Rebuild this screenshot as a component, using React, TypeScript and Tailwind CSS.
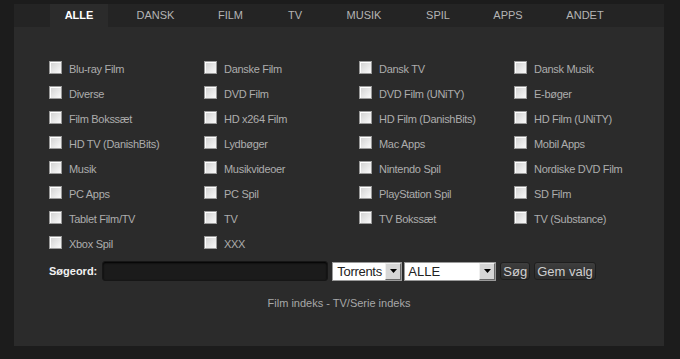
import { useState } from 'react'

const TABS: { label: string; width: number }[] = [
  { label: 'ALLE', width: 58 },
  { label: 'DANSK', width: 65 },
  { label: 'FILM', width: 55 },
  { label: 'TV', width: 44 },
  { label: 'MUSIK', width: 64 },
  { label: 'SPIL', width: 54 },
  { label: 'APPS', width: 56 },
  { label: 'ANDET', width: 68 },
]

const CATEGORIES = [
  'Blu-ray Film', 'Danske Film', 'Dansk TV', 'Dansk Musik',
  'Diverse', 'DVD Film', 'DVD Film (UNiTY)', 'E-bøger',
  'Film Bokssæt', 'HD x264 Film', 'HD Film (DanishBits)', 'HD Film (UNiTY)',
  'HD TV (DanishBits)', 'Lydbøger', 'Mac Apps', 'Mobil Apps',
  'Musik', 'Musikvideoer', 'Nintendo Spil', 'Nordiske DVD Film',
  'PC Apps', 'PC Spil', 'PlayStation Spil', 'SD Film',
  'Tablet Film/TV', 'TV', 'TV Bokssæt', 'TV (Substance)',
  'Xbox Spil', 'XXX',
]

function Checkbox() {
  return (
    <span className="block h-[13px] w-[13px] shrink-0 border border-[#9a9a9a] bg-gradient-to-br from-[#d0d0d0] to-[#fafafa] shadow-[inset_1px_1px_0_#ffffff]" />
  )
}

function DropArrow() {
  return (
    <span className="flex h-[17px] w-[16px] items-center justify-center border border-t-[#f0f0f0] border-l-[#f0f0f0] border-r-[#6a6a6a] border-b-[#6a6a6a] bg-[#d6d6d6]">
      <svg width="7" height="4" viewBox="0 0 7 4">
        <path d="M0 0h7L3.5 4z" fill="#000" />
      </svg>
    </span>
  )
}

export default function App() {
  const [active, setActive] = useState('ALLE')

  return (
    <div className="h-[359px] w-[680px] bg-[#1c1c1c] pl-[14px] pt-[4px] font-['Liberation_Sans',Arial,sans-serif]">
      <div className="h-[342px] w-[650px] bg-[#2b2b2b]">
        {/* Tabs */}
        <div className="flex h-[23px] gap-[15px] bg-[#242424] pl-[36px]">
          {TABS.map((tab) => (
            <button
              key={tab.label}
              onClick={() => setActive(tab.label)}
              style={{ width: tab.width }}
              className={`flex h-full items-center justify-center text-[11px] ${
                active === tab.label ? 'bg-[#2b2b2b] font-bold text-white' : 'text-[#b4b4b4]'
              }`}
            >
              {tab.label}
            </button>
          ))}
        </div>

        {/* Categories */}
        <div className="mt-[34px] grid grid-cols-[155px_155px_155px_155px] pl-[35px]">
          {CATEGORIES.map((name) => (
            <label key={name} className="flex h-[25px] items-start gap-[7px]">
              <Checkbox />
              <span className="mt-[1px] text-[11px] leading-[15px] tracking-[-0.3px] text-[#adadad]">{name}</span>
            </label>
          ))}
        </div>

        {/* Search */}
        <div className="flex items-center pl-[35px]">
          <span className="text-[11px] font-bold text-[#f2f2f2]">Søgeord:</span>
          <input className="ml-[5px] h-[20px] w-[226px] rounded-[3px] border border-[#161616] bg-[#1b1b1b] shadow-[inset_0_1px_2px_#000]" />
          <div className="ml-[4px] flex h-[19px] w-[70px] items-center justify-between border border-[#9a9a9a] bg-white pl-[4px]">
            <span className="text-[13px] leading-none tracking-[-0.3px] text-[#222]">Torrents</span>
            <DropArrow />
          </div>
          <div className="ml-[2px] flex h-[19px] w-[92px] items-center justify-between border border-[#9a9a9a] bg-white pl-[3px]">
            <span className="text-[13px] leading-none text-[#222]">ALLE</span>
            <DropArrow />
          </div>
          <button className="ml-[4px] h-[18px] rounded-[3px] border border-[#1e1e1e] bg-gradient-to-b from-[#3e3e3e] to-[#2c2c2c] px-[2px] text-[13px] leading-none text-[#cfcfcf]">
            Søg
          </button>
          <button className="ml-[4px] h-[18px] rounded-[3px] border border-[#1e1e1e] bg-gradient-to-b from-[#3e3e3e] to-[#2c2c2c] px-[2px] text-[13px] leading-none text-[#cfcfcf]">
            Gem valg
          </button>
        </div>

        {/* Index links */}
        <div className="mt-[14px] text-center text-[11px] text-[#a8a8a8]">
          <a>Film indeks</a> - <a>TV/Serie indeks</a>
        </div>
      </div>
    </div>
  )
}
